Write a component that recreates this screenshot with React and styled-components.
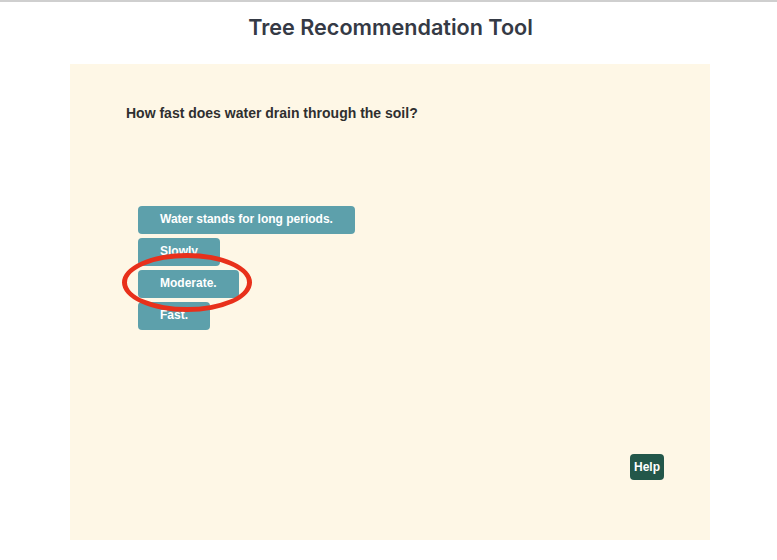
import React from "react";
import styled, { createGlobalStyle } from "styled-components";

const Global = createGlobalStyle`
  html, body {
    margin: 0;
    padding: 0;
    background: #ffffff;
  }
  body {
    border-top: 2px solid #cfcfcf;
    font-family: "Liberation Sans", Arial, sans-serif;
  }
`;

const options = [
  { label: "Water stands for long periods." },
  { label: "Slowly" },
  { label: "Moderate.", circled: true },
  { label: "Fast." },
];

const App = () => {
  return (
    <>
      <Global />
      <Header>
        <Title>Tree Recommendation Tool</Title>
      </Header>
      <Panel>
        <Question>How fast does water drain through the soil?</Question>
        <Options>
          {options.map((o) => (
            <Option key={o.label} $circled={o.circled}>
              {o.label}
            </Option>
          ))}
        </Options>
        <Footer>
          <HelpButton>Help</HelpButton>
        </Footer>
      </Panel>
    </>
  );
};

export default App;

const Header = styled.header`
  height: 62px;
  display: flex;
  justify-content: center;
  align-items: flex-start;
`;

const Title = styled.h1`
  margin: 12px 0 0 4px;
  font-family: Inter, "Noto Sans", sans-serif;
  font-weight: 600;
  font-size: 21.6px;
  color: #353a45;
`;

const Panel = styled.main`
  width: 640px;
  height: 476px;
  margin: 0 67px 0 70px;
  padding: 41px 0 0 56px;
  box-sizing: border-box;
  background: #fef7e6;
  display: flex;
  flex-direction: column;
`;

const Question = styled.p`
  margin: 0;
  font-size: 14px;
  font-weight: 700;
  color: #2f2f2f;
`;

const Options = styled.div`
  margin: 85px 0 0 12px;
  display: flex;
  flex-direction: column;
  align-items: flex-start;
  gap: 4px;
`;

const Option = styled.button`
  position: relative;
  box-sizing: border-box;
  height: 28px;
  padding: 0 22px 3px;
  border: none;
  border-radius: 4px;
  background: #5da0ab;
  color: #ffffff;
  font-family: "Liberation Sans", Arial, sans-serif;
  font-size: 12px;
  font-weight: 700;
  cursor: pointer;

  /* red ring drawn around the chosen answer, over its neighbours */
  &::after {
    content: "";
    display: ${(p) => (p.$circled ? "block" : "none")};
    position: absolute;
    z-index: 2;
    top: -17px;
    right: -13px;
    bottom: -14px;
    left: -16px;
    border: 5px solid #e8301b;
    border-radius: 50%;
    pointer-events: none;
  }
`;

const Footer = styled.div`
  margin-top: auto;
  display: flex;
  justify-content: flex-end;
  padding: 0 46px 60px 0;
`;

const HelpButton = styled.button`
  height: 26px;
  padding: 0 4px;
  border: none;
  border-radius: 4px;
  background: #23574a;
  color: #ffffff;
  font-family: "Liberation Sans", Arial, sans-serif;
  font-size: 12px;
  font-weight: 700;
  cursor: pointer;
`;
